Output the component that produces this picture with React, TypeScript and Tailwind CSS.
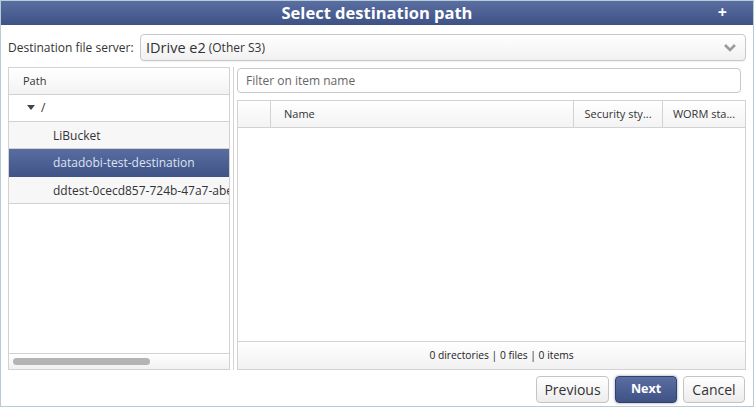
import React from 'react';

const rows = ['LiBucket', 'datadobi-test-destination', 'ddtest-0cecd857-724b-47a7-abe3-1f0c2d9a'];

function Chevron() {
    return (
        <svg width="14" height="9" viewBox="0 0 14 9">
            <path d="M2 2 L7 7 L12 2" fill="none" stroke="#9a9a9a" strokeWidth="2.6" />
        </svg>
    );
}

export default function App() {
    return (
        <div className="w-[754px] h-[407px] border border-[#b7cdd6] bg-white flex flex-col text-[#333] font-['Open_Sans',sans-serif] overflow-hidden">
            {/* title bar */}
            <div className="h-[24px] shrink-0 bg-gradient-to-b from-[#5b6ea2] to-[#3e5286] flex items-center relative">
                <div className="flex-1 text-center text-white font-bold text-[16.5px] leading-none">Select destination path</div>
                <div className="absolute right-[26px] top-[2px] text-white font-bold text-[16px] leading-[18px]">+</div>
            </div>

            <div className="flex-1 flex flex-col px-[7px] pt-[9px]">
                {/* server select */}
                <div className="flex items-center h-[27px]">
                    <span className="text-[12px] w-[132px] shrink-0 whitespace-nowrap">Destination file server:</span>
                    <div className="flex-1 h-[27px] border border-[#c8c8c8] rounded-[4px] bg-gradient-to-b from-white to-[#f1f1f1] flex items-center pl-[5px] pr-[8px] shadow-[0_1px_1px_rgba(0,0,0,0.06)]">
                        <span className="text-[14.5px]">IDrive e2</span>
                        <span className="text-[12px] ml-[3px]">(Other S3)</span>
                        <div className="ml-auto flex items-center"><Chevron /></div>
                    </div>
                </div>

                <div className="flex mt-[6px] h-[303px]">
                    {/* left tree */}
                    <div className="w-[222px] shrink-0 border border-[#d2d2d2] flex flex-col">
                        <div className="h-[27px] border-b border-[#d2d2d2] bg-gradient-to-b from-white to-[#f3f3f3] flex items-center pl-[14px] text-[11px]">Path</div>
                        <div className="h-[27px] border-b border-[#d2d2d2] flex items-center pl-[18px] text-[12px]">
                            <svg width="8" height="6" viewBox="0 0 8 6" className="mr-[6px]"><path d="M0 0 H8 L4 5 Z" fill="#444" /></svg>
                            /
                        </div>
                        {rows.map((r, i) => (
                            <div
                                key={r}
                                className={
                                    i === 1
                                        ? 'h-[28px] flex items-center pl-[44px] text-[12px] whitespace-nowrap overflow-hidden text-[#dde3ef] bg-gradient-to-b from-[#5a6da1] to-[#3f5387]'
                                        : 'h-[27px] flex items-center pt-[2px] pl-[44px] text-[12px] whitespace-nowrap overflow-hidden border-b border-[#d2d2d2] bg-[#f7f7f7]'
                                }
                            >
                                {r}
                            </div>
                        ))}
                        <div className="flex-1" />
                        <div className="h-[16px] border-t border-[#d2d2d2] bg-gradient-to-b from-white to-[#f1f1f1] flex items-center pl-[4px]">
                            <div className="w-[137px] h-[7px] rounded-full bg-[#b4b4b4]" />
                        </div>
                    </div>

                    {/* splitter */}
                    <div className="w-[7px] shrink-0 flex justify-center">
                        <div className="w-px h-full bg-[#d2d2d2]" />
                    </div>

                    {/* right list */}
                    <div className="flex-1 flex flex-col">
                        <div className="h-[25px] mt-[1px] mr-[5px] border border-[#c8c8c8] rounded-[4px] flex items-center pl-[8px] text-[12px] text-[#666]">Filter on item name</div>
                        <div className="flex-1 mt-[7px] border border-[#d2d2d2] flex flex-col">
                            <div className="h-[27px] flex border-b border-[#d2d2d2] bg-gradient-to-b from-white to-[#f3f3f3] text-[11px]">
                                <div className="w-[33px] border-r border-[#d2d2d2]" />
                                <div className="w-[303px] border-r border-[#d2d2d2] flex items-center pl-[13px]">Name</div>
                                <div className="w-[89px] border-r border-[#d2d2d2] flex items-center justify-center">Security sty...</div>
                                <div className="flex-1 flex items-center justify-center">WORM sta...</div>
                            </div>
                            <div className="flex-1" />
                            <div className="h-[28px] border-t border-[#d2d2d2] bg-gradient-to-b from-white to-[#f1f1f1] flex items-center justify-center pl-[20px] text-[10.25px] text-[#222]">
                                0 directories | 0 files | 0 items
                            </div>
                        </div>
                    </div>
                </div>

                {/* buttons */}
                <div className="flex justify-end gap-[6px] mt-[6px] mr-[1px]">
                    <button className="h-[27px] w-[73px] border border-[#c4c4c4] rounded-[4px] bg-gradient-to-b from-white to-[#ececec] text-[14px] text-[#333]">Previous</button>
                    <button className="h-[27px] w-[62px] border border-[#2f4170] rounded-[4px] bg-gradient-to-b from-[#5b6ea2] to-[#3e5286] text-[12.5px] font-bold text-white shadow-[0_0_3px_rgba(0,0,0,0.4)]">Next</button>
                    <button className="h-[27px] w-[62px] border border-[#c4c4c4] rounded-[4px] bg-gradient-to-b from-white to-[#ececec] text-[14px] text-[#333]">Cancel</button>
                </div>
            </div>
        </div>
    );
}
